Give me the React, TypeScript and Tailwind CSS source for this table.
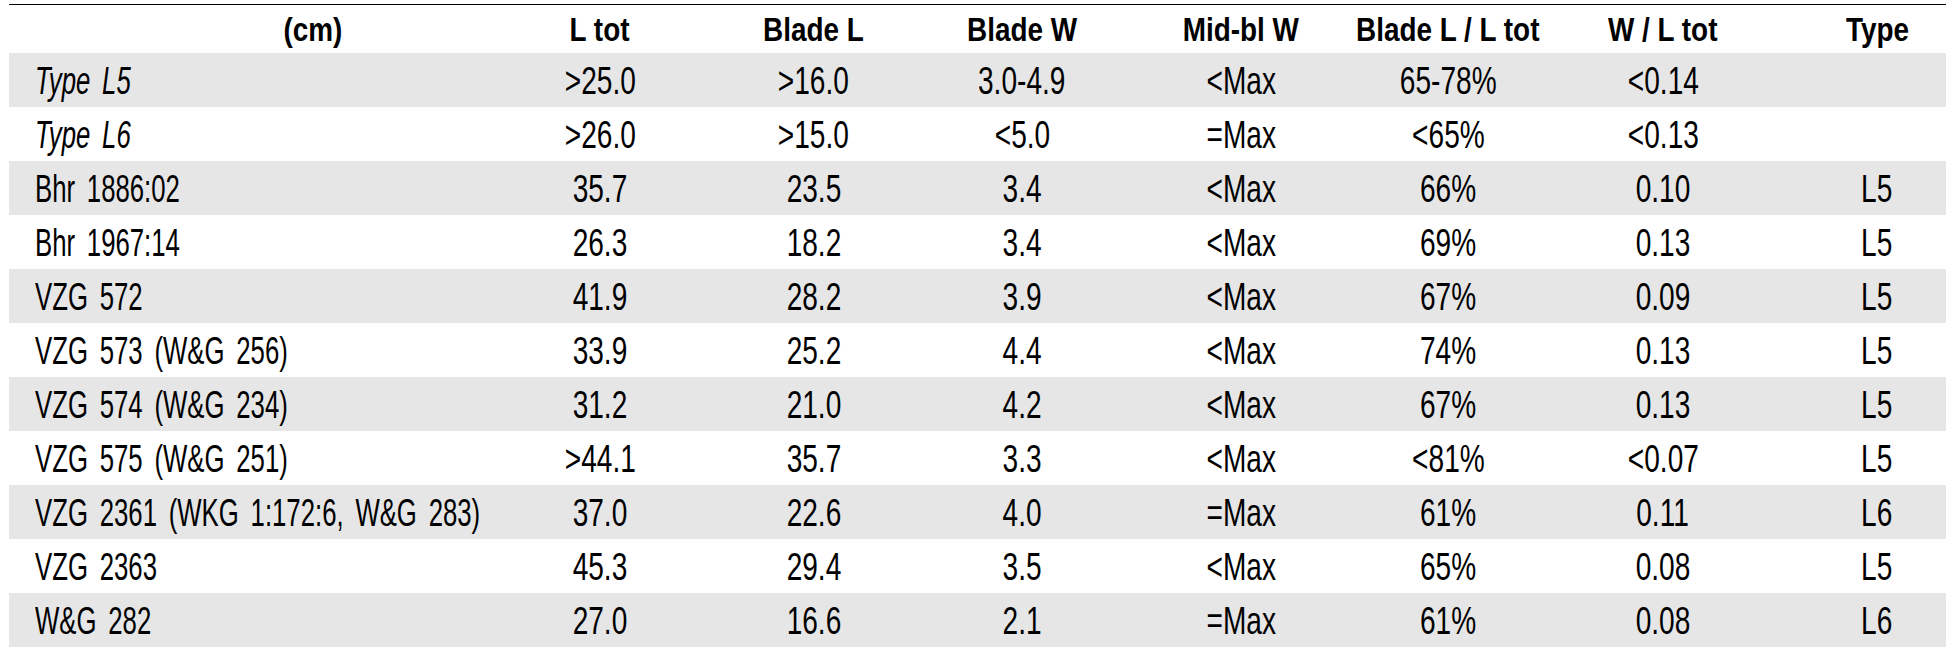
const headers = ["L tot", "Blade L", "Blade W", "Mid-bl W", "Blade L / L tot", "W / L tot", "Type"];

type Row = { name: string; italic?: boolean; cells: string[] };

const rows: Row[] = [
  { name: "Type L5", italic: true, cells: [">25.0", ">16.0", "3.0-4.9", "<Max", "65-78%", "<0.14", ""] },
  { name: "Type L6", italic: true, cells: [">26.0", ">15.0", "<5.0", "=Max", "<65%", "<0.13", ""] },
  { name: "Bhr 1886:02", cells: ["35.7", "23.5", "3.4", "<Max", "66%", "0.10", "L5"] },
  { name: "Bhr 1967:14", cells: ["26.3", "18.2", "3.4", "<Max", "69%", "0.13", "L5"] },
  { name: "VZG 572", cells: ["41.9", "28.2", "3.9", "<Max", "67%", "0.09", "L5"] },
  { name: "VZG 573 (W&G 256)", cells: ["33.9", "25.2", "4.4", "<Max", "74%", "0.13", "L5"] },
  { name: "VZG 574 (W&G 234)", cells: ["31.2", "21.0", "4.2", "<Max", "67%", "0.13", "L5"] },
  { name: "VZG 575 (W&G 251)", cells: [">44.1", "35.7", "3.3", "<Max", "<81%", "<0.07", "L5"] },
  { name: "VZG 2361 (WKG 1:172:6, W&G 283)", cells: ["37.0", "22.6", "4.0", "=Max", "61%", "0.11", "L6"] },
  { name: "VZG 2363", cells: ["45.3", "29.4", "3.5", "<Max", "65%", "0.08", "L5"] },
  { name: "W&G 282", cells: ["27.0", "16.6", "2.1", "=Max", "61%", "0.08", "L6"] },
];

// column widths picked so the centres land where the source table has them
const grid = "grid grid-cols-[486px_210px_217px_200px_238px_176px_254px_156px]";
const lastCol = 7;

export default function App() {
  return (
    <main className="min-h-[660px] bg-white pt-1 pl-[9px] font-['Liberation_Sans',Arial,sans-serif] text-black">
      <div className="w-[1937px] border-t border-black">
        <div className={`${grid} h-[48px] items-center text-[34px] font-bold leading-none`}>
          <div className="flex justify-center pl-[122px]">
            <span className="inline-block scale-x-[0.82] whitespace-nowrap">(cm)</span>
          </div>
          {headers.map((h, j) => (
            <div key={h} className={`flex justify-center ${j + 1 === lastCol ? "pl-[18px]" : ""}`}>
              <span className="inline-block scale-x-[0.82] whitespace-nowrap">{h}</span>
            </div>
          ))}
        </div>
        {rows.map((r, i) => (
          <div
            key={r.name}
            className={`${grid} h-[54px] items-center text-[39px] leading-none ${
              i % 2 === 0 ? "bg-[#e6e6e6]" : "bg-white"
            }`}
          >
            <div className="pl-[26px]">
              <span
                className={`inline-block origin-left scale-x-[0.66] whitespace-nowrap [word-spacing:0.18em] ${
                  r.italic ? "italic" : ""
                }`}
              >
                {r.name}
              </span>
            </div>
            {r.cells.map((c, j) => (
              <div key={j} className={`flex justify-center ${j + 1 === lastCol ? "pl-[18px]" : ""}`}>
                <span className="inline-block scale-x-[0.72] whitespace-nowrap">{c}</span>
              </div>
            ))}
          </div>
        ))}
      </div>
    </main>
  );
}
